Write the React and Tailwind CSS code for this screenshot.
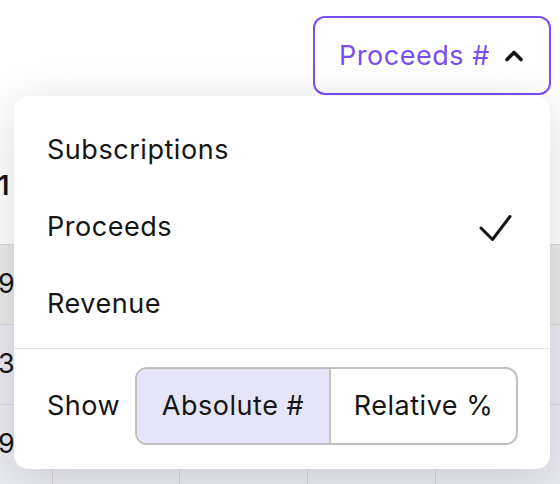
export default function App() {
  const rows = [
    { n: "9", bg: "bg-[#e9e9e9]" },
    { n: "3", bg: "bg-[#eaeaf3]" },
    { n: "9", bg: "bg-[#eaeaf3]" },
  ];
  return (
    <div className="relative w-[560px] h-[484px] overflow-hidden bg-white font-['Inter',sans-serif] text-[#151515] text-[27px] tracking-[0.02em]">
      <div className="h-[128px] flex justify-end items-start pt-[16px] pr-[9px]">
        <button className="h-[79px] w-[238px] rounded-[12px] border-2 border-[#7b4ef5] flex items-center pl-[24px] pr-[26px] text-[#7b4ef5]">
          <span className="leading-none">Proceeds #</span>
          <svg className="ml-auto" width="18" height="13" viewBox="0 0 18 13" fill="none">
            <polyline points="2,10.5 9,3.5 16,10.5" stroke="#151515" strokeWidth="3.6" strokeLinecap="round" strokeLinejoin="round" />
          </svg>
        </button>
      </div>
      <div className="h-[116px] flex items-center bg-white">
        <span className="ml-[-2px] font-semibold">1</span>
      </div>
      {rows.map((r, i) => (
        <div key={i} className={`h-[80px] grid grid-cols-[52px_127px_128px_128px_1fr] border-t border-[#d9d9d9] ${r.bg}`}>
          <div className="flex items-center"><span className="ml-[-2px]">{r.n}</span></div>
          <div className="border-l border-[#d4d4d4]" />
          <div className="border-l border-[#d4d4d4]" />
          <div className="border-l border-[#d4d4d4]" />
          <div className="border-l border-[#d4d4d4]" />
        </div>
      ))}

      <div className="absolute left-[14px] top-[96px] w-[536px] h-[373px] rounded-[14px] bg-white shadow-[0_8px_50px_rgba(0,0,0,0.14)] flex flex-col">
        <div className="pt-[16px] pb-[5px]">
          <div className="h-[77px] flex items-center pl-[33px] pr-[38px]">Subscriptions</div>
          <div className="h-[77px] flex items-center pl-[33px] pr-[38px] justify-between">
            <span>Proceeds</span>
            <svg width="33" height="28" viewBox="0 0 33 28" fill="none">
              <polyline points="2,14 13.5,25.5 31,2.5" stroke="#151515" strokeWidth="3" strokeLinecap="round" strokeLinejoin="round" />
            </svg>
          </div>
          <div className="h-[77px] flex items-center pl-[33px] pr-[38px]">Revenue</div>
        </div>
        <div className="h-px bg-[#e3e3e3]" />
        <div className="flex items-center pl-[33px] pt-[18px]">
          <span className="w-[88px]">Show</span>
          <div className="flex h-[78px] w-[383px] rounded-[12px] border-2 border-[#c0c0c0] overflow-hidden">
            <div className="w-[194px] bg-[#e6e5f8] border-r-2 border-[#c4c4c4] flex items-center justify-center">Absolute #</div>
            <div className="flex-1 flex items-center justify-center">Relative %</div>
          </div>
        </div>
      </div>
    </div>
  );
}
